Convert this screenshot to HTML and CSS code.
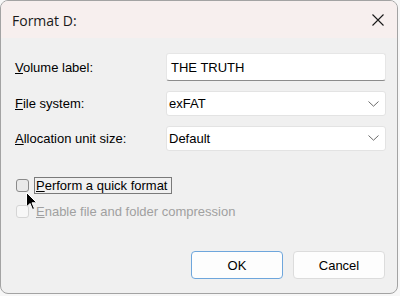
FILE: index.html
```html
<!DOCTYPE html>
<html lang="en">
<head>
    <meta charset="UTF-8">
    <title>Format D:</title>
    <link rel="stylesheet" href="styles.css">
</head>
<body>
    <div class="dialog">
        <div class="titlebar">
            <span class="title">Format D:</span>
            <svg class="close" width="12" height="12" viewBox="0 0 12 12">
                <path d="M0.5 0.5 L11.5 11.5 M11.5 0.5 L0.5 11.5" stroke="#1a1a1a" stroke-width="1.1" fill="none"/>
            </svg>
        </div>
        <div class="content">
            <div class="fields">
                <label class="label"><u>V</u>olume label:</label>
                <div class="textbox">THE TRUTH</div>

                <label class="label"><u>F</u>ile system:</label>
                <div class="select">exFAT
                    <svg class="chevron" width="11" height="6" viewBox="0 0 11 6"><path d="M0.5 0.5 L5.5 5.2 L10.5 0.5" stroke="#6b6b6b" fill="none"/></svg>
                </div>

                <label class="label"><u>A</u>llocation unit size:</label>
                <div class="select">Default
                    <svg class="chevron" width="11" height="6" viewBox="0 0 11 6"><path d="M0.5 0.5 L5.5 5.2 L10.5 0.5" stroke="#6b6b6b" fill="none"/></svg>
                </div>
            </div>

            <div class="options">
                <div class="check-row">
                    <span class="checkbox"></span>
                    <span class="check-text focused"><u>P</u>erform a quick format</span>
                    <svg class="cursor" width="12" height="19" viewBox="0 0 12 19">
                        <path d="M0.5 0.5 L0.5 15 L4 11.5 L6.5 17.5 L8.5 16.6 L6 10.8 L10.8 10.8 Z" fill="#000" stroke="#fff" stroke-width="1"/>
                    </svg>
                </div>
                <div class="check-row disabled">
                    <span class="checkbox"></span>
                    <span class="check-text"><u>E</u>nable file and folder compression</span>
                </div>
            </div>

            <div class="buttons">
                <button class="btn default">OK</button>
                <button class="btn">Cancel</button>
            </div>
        </div>
    </div>
</body>
</html>
```

FILE: styles.css
```css
body {
    margin: 0;
    background-color: #f7f7f7;
    font-family: "Liberation Sans", Arial, sans-serif;
    font-size: 13px;
    color: #000;
}
.dialog {
    width: 398px;
    height: 294px;
    box-sizing: border-box;
    border: 1px solid #a3a3a3;
    border-radius: 8px;
    background-color: #f0f0f0;
    overflow: hidden;
    display: flex;
    flex-direction: column;
}
.titlebar {
    height: 37px;
    flex: none;
    background-color: #f7efee;
    display: flex;
    align-items: center;
    justify-content: space-between;
    padding: 0 13px 0 11px;
}
.title {
    font-family: "Open Sans", "Noto Sans", sans-serif;
    font-size: 14px;
    color: #1a1a1a;
    margin-top: 1px;
}
.close {
    margin-top: 1px;
}
.content {
    flex: 1;
    padding: 15px 11px 0 14px;
    display: flex;
    flex-direction: column;
}
.fields {
    display: grid;
    grid-template-columns: 151px 1fr;
    grid-template-rows: 28px 25px 25px;
    row-gap: 10px;
    align-items: center;
}
.fields .select:last-child {
    margin-top: -1px;
}
.label {
    padding-top: 0;
}
.textbox {
    height: 28px;
    box-sizing: border-box;
    background-color: #fff;
    border: 1px solid #e6e6e6;
    border-bottom: 1px solid #8c8c8c;
    border-radius: 3px;
    padding: 0 4px;
    display: flex;
    align-items: center;
}
.select {
    height: 25px;
    box-sizing: border-box;
    background-color: #fff;
    border: 1px solid #e3e3e3;
    border-radius: 3px;
    padding: 0 6px 0 2px;
    display: flex;
    align-items: center;
    justify-content: space-between;
}
.options {
    margin-top: 26px;
    display: flex;
    flex-direction: column;
    gap: 9px;
}
.check-row {
    position: relative;
    display: flex;
    align-items: center;
    height: 17px;
}
.checkbox {
    width: 13px;
    height: 13px;
    box-sizing: border-box;
    border: 1px solid #8a8a8a;
    border-radius: 3px;
    background-color: #e9e9e9;
    margin: 0 5px 0 1px;
}
.check-text {
    padding: 0 3px 0 1px;
    height: 17px;
    box-sizing: border-box;
    display: flex;
    align-items: center;
    border: 1px solid transparent;
}
.check-text.focused {
    border: 1px solid #7a7a7a;
}
.disabled {
    color: #a0a0a0;
}
.disabled .checkbox {
    border-color: #d5d5d5;
    background-color: #f7f7f7;
}
.cursor {
    position: absolute;
    left: 11px;
    top: 15px;
}
.buttons {
    margin-top: auto;
    margin-bottom: 14px;
    display: flex;
    justify-content: flex-end;
    gap: 10px;
    padding-right: 1px;
}
.btn {
    width: 92px;
    height: 28px;
    font-family: "Liberation Sans", Arial, sans-serif;
    font-size: 13px;
    color: #000;
    background-color: #fdfdfd;
    border: 1px solid #dcdcdc;
    border-radius: 4px;
}
.btn.default {
    border-color: #6ea6dc;
}
```
